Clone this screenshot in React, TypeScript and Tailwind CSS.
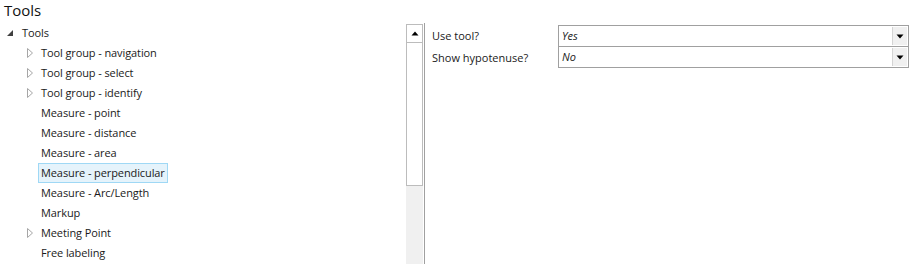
import React from "react";

type Node = {
  label: string;
  depth: number;
  kind: "open" | "closed" | "leaf";
  selected?: boolean;
};

const nodes: Node[] = [
  { label: "Tools", depth: 0, kind: "open" },
  { label: "Tool group - navigation", depth: 1, kind: "closed" },
  { label: "Tool group - select", depth: 1, kind: "closed" },
  { label: "Tool group - identify", depth: 1, kind: "closed" },
  { label: "Measure - point", depth: 1, kind: "leaf" },
  { label: "Measure - distance", depth: 1, kind: "leaf" },
  { label: "Measure - area", depth: 1, kind: "leaf" },
  { label: "Measure - perpendicular", depth: 1, kind: "leaf", selected: true },
  { label: "Measure - Arc/Length", depth: 1, kind: "leaf" },
  { label: "Markup", depth: 1, kind: "leaf" },
  { label: "Meeting Point", depth: 1, kind: "closed" },
  { label: "Free labeling", depth: 1, kind: "leaf" },
];

const Expander = ({ kind }: { kind: Node["kind"] }) => {
  if (kind === "open") {
    return (
      <svg width="6" height="6" viewBox="0 0 6 6" className="block">
        <path d="M6 0 L6 6 L0 6 Z" fill="#404040" />
      </svg>
    );
  }
  if (kind === "closed") {
    return (
      <svg width="6" height="10" viewBox="0 0 6 10" className="block">
        <path d="M0.5 0.5 L5.5 5 L0.5 9.5 Z" fill="none" stroke="#a6a6a6" strokeWidth="1" />
      </svg>
    );
  }
  return null;
};

const TreeRow = ({ node }: { node: Node }) => (
  <div className="flex h-[20px] items-center">
    <div
      className={
        node.depth === 0
          ? "flex w-[22px] justify-start pl-[7px]"
          : "flex w-[38px] justify-start pl-[27px]"
      }
    >
      <Expander kind={node.kind} />
    </div>
    <span
      className={
        node.selected
          ? "flex h-[20px] items-center border border-[#9fd8f5] bg-[#e5f3fb] px-[2px] pt-[1px]"
          : node.depth === 0
          ? "flex h-[20px] items-center pt-[1px]"
          : "flex h-[20px] items-center pl-[3px] pt-[1px]"
      }
    >
      {node.label}
    </span>
  </div>
);

const DownArrow = () => (
  <svg width="8" height="5" viewBox="0 0 8 5" className="block">
    <path d="M0.5 0.5 L7.5 0.5 L4 4.5 Z" fill="#000" />
  </svg>
);

const Dropdown = ({ value, first }: { value: string; first?: boolean }) => (
  <div
    className={
      first
        ? "flex h-[22px] border border-[#a0a0a0] bg-white"
        : "flex h-[21px] border border-t-0 border-[#a0a0a0] bg-white"
    }
  >
    <span className="flex flex-1 items-center pl-[3px] pt-[1px] italic">{value}</span>
    <div className="m-[1px] flex w-[15px] items-center justify-center border-l border-[#d4d4d4] bg-[#f0f0f0]">
      <DownArrow />
    </div>
  </div>
);

const App = () => {
  return (
    <div
      className="h-[264px] w-[913px] overflow-hidden bg-white text-[11px] text-[#1a1a1a]"
      style={{ fontFamily: '"Open Sans", "Noto Sans", sans-serif' }}
    >
      <div className="h-[23px] pl-[4px] text-[15px] leading-[21px] text-[#111]">Tools</div>
      <div className="flex h-[241px]">
        <div className="w-[406px] tracking-[-0.1px]">
          {nodes.map((n) => (
            <TreeRow key={n.label} node={n} />
          ))}
        </div>

        <div className="mt-[1px] flex w-[17px] flex-col bg-[#f0f0f0]">
          <div className="flex h-[19px] items-center justify-center border border-[#bcbcbc] bg-white">
            <svg width="8" height="5" viewBox="0 0 8 5" className="block">
              <path d="M0.5 4.5 L7.5 4.5 L4 0.5 Z" fill="#000" />
            </svg>
          </div>
          <div className="h-[143px] border border-t-0 border-[#bcbcbc] bg-white" />
        </div>

        <div className="ml-[1px] w-[1px] bg-[#a0a0a0]" />

        <div className="flex-1 pt-[2px] pr-[4px]">
          <div className="grid grid-cols-[133px_1fr]">
            <div className="flex h-[22px] items-center pl-[7px] pt-[1px]">Use tool?</div>
            <Dropdown value="Yes" first />
            <div className="flex h-[21px] items-center pl-[7px] pt-[1px]">Show hypotenuse?</div>
            <Dropdown value="No" />
          </div>
        </div>
      </div>
    </div>
  );
};

export default App;
